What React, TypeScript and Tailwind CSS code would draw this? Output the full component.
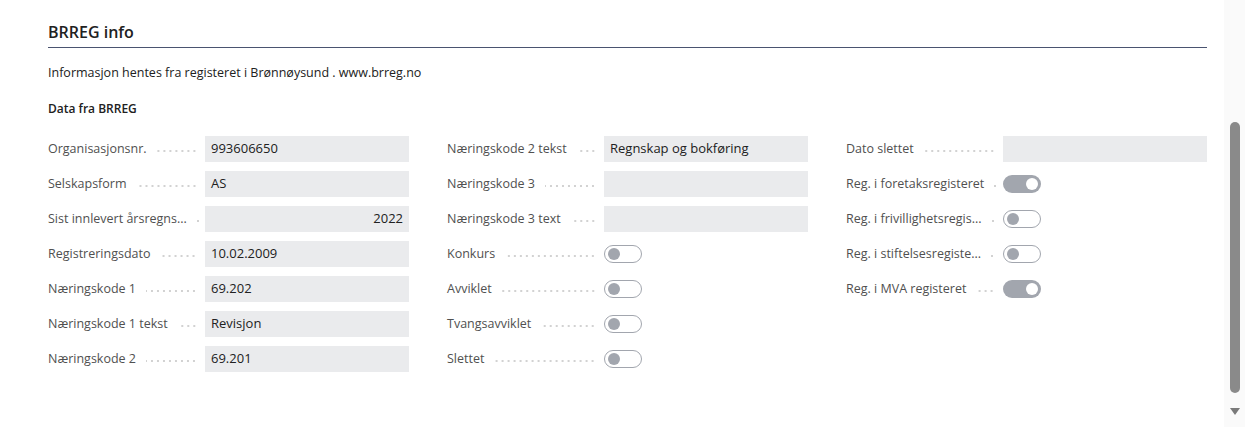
import React from "react";

type Field =
  | { label: string; kind: "text"; value?: string; align?: "right" }
  | { label: string; kind: "toggle"; on: boolean };

const columns: Field[][] = [
  [
    { label: "Organisasjonsnr.", kind: "text", value: "993606650" },
    { label: "Selskapsform", kind: "text", value: "AS" },
    { label: "Sist innlevert årsregns...", kind: "text", value: "2022", align: "right" },
    { label: "Registreringsdato", kind: "text", value: "10.02.2009" },
    { label: "Næringskode 1", kind: "text", value: "69.202" },
    { label: "Næringskode 1 tekst", kind: "text", value: "Revisjon" },
    { label: "Næringskode 2", kind: "text", value: "69.201" },
  ],
  [
    { label: "Næringskode 2 tekst", kind: "text", value: "Regnskap og bokføring" },
    { label: "Næringskode 3", kind: "text" },
    { label: "Næringskode 3 text", kind: "text" },
    { label: "Konkurs", kind: "toggle", on: false },
    { label: "Avviklet", kind: "toggle", on: false },
    { label: "Tvangsavviklet", kind: "toggle", on: false },
    { label: "Slettet", kind: "toggle", on: false },
  ],
  [
    { label: "Dato slettet", kind: "text" },
    { label: "Reg. i foretaksregisteret", kind: "toggle", on: true },
    { label: "Reg. i frivillighetsregis...", kind: "toggle", on: false },
    { label: "Reg. i stiftelsesregiste...", kind: "toggle", on: false },
    { label: "Reg. i MVA registeret", kind: "toggle", on: true },
  ],
];

const Toggle = ({ on }: { on: boolean }) =>
  on ? (
    <div className="flex h-[18px] w-[38px] items-center justify-end rounded-full bg-[#a2a6ae] pr-[3px]">
      <div className="h-[12px] w-[12px] rounded-full bg-white" />
    </div>
  ) : (
    <div className="flex h-[18px] w-[38px] items-center rounded-full border border-[#a2a6ae] bg-white pl-[3px]">
      <div className="h-[12px] w-[12px] rounded-full bg-[#a2a6ae]" />
    </div>
  );

const Row = ({ field }: { field: Field }) => (
  <div className="flex h-[26px] items-center">
    <div className="flex w-[157px] shrink-0 translate-y-[1px] items-center pr-[8px]">
      <span className="shrink-0 whitespace-nowrap text-[12.5px] text-[#505050]">
        {field.label}
      </span>
      {/* dotted leader */}
      <span className="ml-[10px] h-[2px] min-w-[4px] flex-1 translate-y-[1px] bg-[radial-gradient(circle,#d2d2d2_0.8px,transparent_1.1px)] bg-[length:6px_2px] bg-right" />
    </div>
    {field.kind === "text" ? (
      <div
        className={`flex h-[26px] w-[204px] items-center bg-[#eaebed] px-[6px] text-[13px] text-[#212121] ${
          field.align === "right" ? "justify-end" : ""
        }`}
      >
        {field.value}
      </div>
    ) : (
      <Toggle on={field.on} />
    )}
  </div>
);

export default function App() {
  return (
    <div
      className="flex h-[427px] w-full bg-white"
      style={{ fontFamily: '"Open Sans", "Noto Sans", sans-serif' }}
    >
      <div className="flex-1 pl-[48px] pr-[17px] pt-[20px]">
        <div className="border-b border-[#4a5370] pb-[3px]">
          <h2 className="text-[16px] font-semibold text-[#212121]">BRREG info</h2>
        </div>
        <p className="mt-[16px] text-[12.5px] text-[#212121]">
          Informasjon hentes fra registeret i Brønnøysund . www.brreg.no
        </p>
        <p className="mt-[17px] text-[12px] font-semibold text-[#212121]">Data fra BRREG</p>
        <div className="mt-[18px] flex gap-[38px]">
          {columns.map((col, i) => (
            <div key={i} className="flex w-[361px] flex-col gap-[9px]">
              {col.map((f) => (
                <Row key={f.label} field={f} />
              ))}
            </div>
          ))}
        </div>
      </div>
      {/* scrollbar */}
      <div className="flex w-[21px] flex-col items-center bg-[#fafafa] pt-[122px]">
        <div className="h-[271px] w-[10px] rounded-full bg-[#8a8a8a]" />
        <svg className="mt-[15px]" width="10" height="8" viewBox="0 0 10 8">
          <path d="M0 0 L10 0 L5 7 Z" fill="#7a7a7a" />
        </svg>
      </div>
    </div>
  );
}
